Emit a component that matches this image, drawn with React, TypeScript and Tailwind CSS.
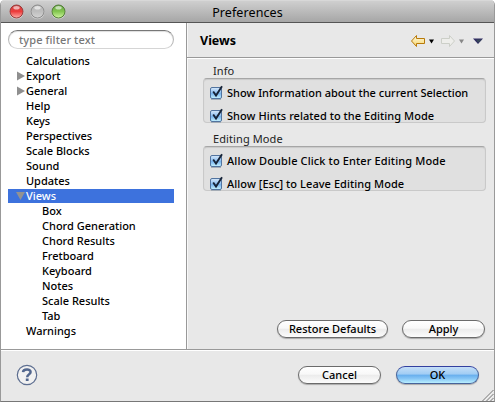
import React from "react";

type Node = { label: string; level?: number; state?: "closed" | "open" };

const nodes: Node[] = [
  { label: "Calculations" },
  { label: "Export", state: "closed" },
  { label: "General", state: "closed" },
  { label: "Help" },
  { label: "Keys" },
  { label: "Perspectives" },
  { label: "Scale Blocks" },
  { label: "Sound" },
  { label: "Updates" },
  { label: "Views", state: "open" },
  { label: "Box", level: 1 },
  { label: "Chord Generation", level: 1 },
  { label: "Chord Results", level: 1 },
  { label: "Fretboard", level: 1 },
  { label: "Keyboard", level: 1 },
  { label: "Notes", level: 1 },
  { label: "Scale Results", level: 1 },
  { label: "Tab", level: 1 },
  { label: "Warnings" },
];

function Light({ id, edge, top, mid, low }: { id: string; edge: string; top: string; mid: string; low: string }) {
  return (
    <svg width="15" height="16" viewBox="0 0 15 16">
      <defs>
        <linearGradient id={id} x1="0" y1="0" x2="0" y2="1">
          <stop offset="0" stopColor={top} />
          <stop offset=".5" stopColor={mid} />
          <stop offset="1" stopColor={low} />
        </linearGradient>
      </defs>
      <circle cx="7.5" cy="8.3" r="7" fill="#e4e4e4" opacity=".6" />
      <circle cx="7.5" cy="7.5" r="6.5" fill={`url(#${id})`} stroke={edge} />
      <ellipse cx="7.5" cy="3.8" rx="3.2" ry="1.8" fill="#fff" opacity=".6" />
    </svg>
  );
}

function Check({ label, className = "" }: { label: string; className?: string }) {
  return (
    <div className="flex h-[23px] items-center">
      <svg width="15" height="17" viewBox="0 0 15 17" className="mr-[2px] mb-[2px] shrink-0">
        <defs>
          <linearGradient id="checkFill" x1="0" y1="0" x2="0" y2="1">
            <stop offset="0" stopColor="#d8e9fa" />
            <stop offset=".45" stopColor="#92c2f2" />
            <stop offset=".55" stopColor="#78b4ee" />
            <stop offset="1" stopColor="#c8f4ff" />
          </linearGradient>
        </defs>
        <rect x=".5" y="3.5" width="11" height="11" rx="1.5" fill="url(#checkFill)" stroke="#52749f" />
        <path d="M1 15.5h10" stroke="#a5adb6" />
        <path d="M3.2 7.5l2.8 4L12 2.2" fill="none" stroke="#172438" strokeWidth="1.9" />
      </svg>
      <span className={`pb-[2px] whitespace-nowrap ${className}`}>{label}</span>
    </div>
  );
}

function Group({ children }: { children: React.ReactNode }) {
  return (
    <div className="h-[45px] w-[283px] rounded-[4px] border border-[#c9c9c9] border-t-[#a6a6a6] bg-[#e0e0e0] pl-[6px] pt-[3px] shadow-[inset_0_1px_1px_#c9c9c9]">
      {children}
    </div>
  );
}

function PushButton({ label, className, primary }: { label: string; className: string; primary?: boolean }) {
  const look = primary
    ? "border-[#47639a] border-t-[#3340a0] bg-[linear-gradient(#c5def7_0%,#a0ccf4_45%,#66aeed_50%,#86c5f5_72%,#b9efff_100%)]"
    : "border-[#6b6b6b] bg-[linear-gradient(#fff_0%,#f8f8f8_45%,#ececec_52%,#fcfcfc_100%)]";
  return (
    <button className={`flex h-[18px] items-center justify-center rounded-full border pb-[2px] whitespace-nowrap shadow-[0_1px_1px_#aaa] ${look} ${className}`}>
      {label}
    </button>
  );
}

export default function App() {
  return (
    <div className="flex h-[402px] w-[495px] flex-col overflow-hidden rounded-t-[5px] border-x border-b border-[#999] border-b-[#777] bg-[#e8e8e8] font-['Noto_Sans','Lato',sans-serif] text-[11px] leading-[15px] font-medium text-black">
      <header className="relative flex h-[23px] shrink-0 items-center justify-center border-t border-b border-t-[#d8d8d8] border-b-[#555] bg-[linear-gradient(#cfcfcf,#a6a6a6)] pt-[2px]">
        <div className="absolute top-[3px] left-[8px] flex gap-[6px]">
          <Light id="red" edge="#983b3a" top="#cb4444" mid="#ed3c3c" low="#ffb0aa" />
          <Light id="gray" edge="#8c8c8c" top="#b8b8b8" mid="#bebebe" low="#d4d4d4" />
          <Light id="green" edge="#527d37" top="#66a045" mid="#83c650" low="#d0f7a0" />
        </div>
        <h1 className="text-[12.5px] font-normal tracking-[.1px]">Preferences</h1>
      </header>
      <main className="flex h-[326px] shrink-0">
        <aside className="w-[185px] shrink-0 bg-white pt-[7px] pl-[7px]">
          <div className="flex h-[19px] w-[166px] items-center rounded-full border border-[#b5b5b5] border-t-[#777] border-b-[#d5d5d5] pl-[10px] text-[#777] shadow-[inset_0_1px_1px_#ddd]">
            <span className="tracking-[.1px]">type filter text</span>
          </div>
          <ul className="mt-[5px] w-[166px]">
            {nodes.map((n) => (
              <li key={n.label} className={`mb-px flex h-[14px] items-center ${n.level ? "pl-[34px]" : "pl-[8px]"} ${n.state === "open" ? "bg-[#3d72dd] text-white" : ""}`}>
                {!n.level && (
                  <svg width="10" height="10" viewBox="0 0 10 10" className="mb-px shrink-0">
                    {n.state === "closed" && <path d="M1 .5l8 4.5-8 4.5z" fill="#8f8f8f" />}
                    {n.state === "open" && <path d="M0 1h9L4.5 9z" fill="#929292" />}
                  </svg>
                )}
                <span className="pb-[2px] whitespace-nowrap">{n.label}</span>
              </li>
            ))}
          </ul>
        </aside>
        <section className="flex w-[308px] flex-col border-l border-[#999] shadow-[inset_1px_0_0_#f8f8f8]">
          <div className="flex h-[35px] shrink-0 items-center border-b border-[#999] pl-[13px]">
            <h2 className="text-[12.5px] font-bold">Views</h2>
            <svg width="76" height="16" viewBox="0 0 76 16" className="mt-[2px] mr-[8px] ml-auto">
              <defs>
                <linearGradient id="gold" x1="0" y1="0" x2="0" y2="1">
                  <stop offset="0" stopColor="#fffbe3" />
                  <stop offset="1" stopColor="#f6d56b" />
                </linearGradient>
              </defs>
              <path d="M1.5 8l5-5.5v3h8v5h-8v3z" fill="url(#gold)" stroke="#b87a0a" strokeLinejoin="round" />
              <path d="M19 6.5h5l-2.5 4z" fill="#000" />
              <path d="M44.5 8l-5-5.5v3h-8v5h8v3z" fill="#eeeeeb" stroke="#cccfc8" strokeLinejoin="round" />
              <path d="M49 6.5h5l-2.5 4z" fill="#888" />
              <path d="M63 5.5h10L68 11z" fill="#302b63" />
              <path d="M66 6.5h6L68 10z" fill="#36475a" />
            </svg>
          </div>
          <div className="flex flex-1 flex-col border-t border-white pl-[16px]">
            <div className="flex h-[19px] items-end pl-[10px] font-normal tracking-[.1px] text-[#222]">Info</div>
            <Group>
              <Check label="Show Information about the current Selection" />
              <Check label="Show Hints related to the Editing Mode" className="tracking-[.04px]" />
            </Group>
            <div className="flex h-[23px] items-end pl-[10px] font-normal tracking-[.1px] text-[#222]">Editing Mode</div>
            <Group>
              <Check label="Allow Double Click to Enter Editing Mode" className="tracking-[.12px]" />
              <Check label="Allow [Esc] to Leave Editing Mode" className="tracking-[.06px]" />
            </Group>
            <div className="mt-auto mb-[11px] ml-[74px] flex gap-[14px]">
              <PushButton label="Restore Defaults" className="w-[111px]" />
              <PushButton label="Apply" className="w-[83px]" />
            </div>
          </div>
        </section>
      </main>
      <footer className="flex flex-1 border-t border-[#999]">
        <div className="relative flex flex-1 border-t border-white pt-[15px] pl-[15px]">
          <svg width="22" height="22" viewBox="0 0 22 22" className="-mt-[2px]">
            <circle cx="11" cy="11" r="9.7" fill="#f1f1f1" stroke="#5e6f91" strokeWidth="1.2" />
            <path d="M7 8.2C7.2 5.1 14.6 4.4 14.6 8c0 2.3-3.4 2.5-3.4 5.2" fill="none" stroke="#53678e" strokeWidth="2.5" />
            <rect x="9.8" y="14.5" width="2.8" height="2.5" fill="#53678e" />
          </svg>
          <div className="ml-[260px] flex gap-[15px]">
            <PushButton label="Cancel" className="w-[83px]" />
            <PushButton label="OK" primary className="w-[83px]" />
          </div>
          <svg width="12" height="12" viewBox="0 0 12 12" className="absolute right-0 bottom-0">
            <path d="M1.7 12L12 1.7M5.7 12L12 5.7M9.7 12L12 9.7" stroke="#f8f8f8" strokeWidth=".8" fill="none" />
            <path d="M.5 12L11.5 1M4.5 12L11.5 5M8.500 12l3-3" stroke="#777" fill="none" />
          </svg>
        </div>
      </footer>
    </div>
  );
}
